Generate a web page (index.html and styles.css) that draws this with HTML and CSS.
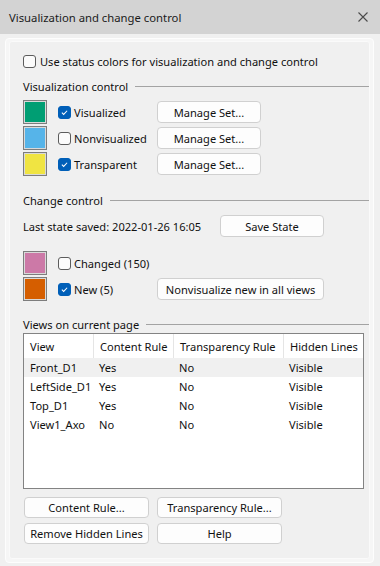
FILE: index.html
```html
<!DOCTYPE html>
<html>
<head>
<meta charset="utf-8">
<link rel="stylesheet" href="styles.css">
</head>
<body>
<div class="titlebar">
  <span class="title">Visualization and change control</span>
  <svg class="close" width="10" height="10" viewBox="0 0 10 10"><path d="M0.5 0.5 L9.5 9.5 M9.5 0.5 L0.5 9.5" stroke="#4a4a4a" stroke-width="1.1" fill="none"/></svg>
</div>
<div class="frame">
  <div class="panel">
    <div class="toprow"><span class="cb"></span><span class="toplbl">Use status colors for visualization and change control</span></div>

    <div class="ghead h-vis"><span>Visualization control</span><span class="rule"></span></div>
    <div class="srows s-vis">
      <div class="srow"><span class="swatch green"></span><span class="cbl"><span class="cb on"><svg viewBox="0 0 13 13"><path d="M3.4 6.7 L5.5 8.8 L9.6 4.4" stroke="#fff" stroke-width="1.2" fill="none"/></svg></span><span class="lbl">Visualized</span></span><span class="btn manage">Manage Set...</span></div>
      <div class="srow"><span class="swatch blue"></span><span class="cbl"><span class="cb"></span><span class="lbl">Nonvisualized</span></span><span class="btn manage">Manage Set...</span></div>
      <div class="srow"><span class="swatch yellow"></span><span class="cbl"><span class="cb on"><svg viewBox="0 0 13 13"><path d="M3.4 6.7 L5.5 8.8 L9.6 4.4" stroke="#fff" stroke-width="1.2" fill="none"/></svg></span><span class="lbl">Transparent</span></span><span class="btn manage">Manage Set...</span></div>
    </div>

    <div class="ghead h-chg"><span>Change control</span><span class="rule"></span></div>
    <div class="saverow"><span class="savedtxt">Last state saved: 2022-01-26 16:05</span><span class="btn save">Save State</span></div>
    <div class="srows s-chg">
      <div class="srow"><span class="swatch pink"></span><span class="cbl"><span class="cb"></span><span class="lbl">Changed (150)</span></span></div>
      <div class="srow"><span class="swatch orange"></span><span class="cbl"><span class="cb on"><svg viewBox="0 0 13 13"><path d="M3.4 6.7 L5.5 8.8 L9.6 4.4" stroke="#fff" stroke-width="1.2" fill="none"/></svg></span><span class="lbl">New (5)</span></span><span class="btn nonvis">Nonvisualize new in all views</span></div>
    </div>

    <div class="ghead h-views"><span>Views on current page</span><span class="rule"></span></div>
    <div class="table">
      <div class="trow thead"><span class="c1">View</span><span class="c2">Content Rule</span><span class="c3">Transparency Rule</span><span class="c4">Hidden Lines</span></div>
      <div class="trow sel"><span class="c1">Front_D1</span><span class="c2">Yes</span><span class="c3">No</span><span class="c4">Visible</span></div>
      <div class="trow"><span class="c1">LeftSide_D1</span><span class="c2">Yes</span><span class="c3">No</span><span class="c4">Visible</span></div>
      <div class="trow"><span class="c1">Top_D1</span><span class="c2">Yes</span><span class="c3">No</span><span class="c4">Visible</span></div>
      <div class="trow"><span class="c1">View1_Axo</span><span class="c2">No</span><span class="c3">No</span><span class="c4">Visible</span></div>
    </div>

    <div class="btngrid">
      <span class="btn wide">Content Rule...</span>
      <span class="btn wide">Transparency Rule...</span>
      <span class="btn wide">Remove Hidden Lines</span>
      <span class="btn wide">Help</span>
    </div>
  </div>
</div>
</body>
</html>
```
FILE: styles.css
```css
* { box-sizing: border-box; }
html, body { margin: 0; padding: 0; }
body {
  width: 380px;
  height: 566px;
  overflow: hidden;
  background: #f0f0f0;
  font-family: "Noto Sans", "Open Sans", sans-serif;
  font-size: 11.1px;
  color: #111;
}
.titlebar {
  height: 34px;
  background: #d3d3d3;
  display: flex;
  align-items: center;
  justify-content: space-between;
  padding: 0 12px 0 9px;
}
.title { font-size: 11.3px; color: #1b1b1b; }
.close { display: block; margin-top: 0; }

.frame {
  margin: 4px 6px 0 5px;
  border: 1px solid #fdfdfd;
  border-radius: 4px;
  background: #f6f6f6;
  padding: 2px 3px 3px 3px;
}
.panel {
  border: 1px solid #fafafa;
  border-radius: 3px;
  background: #f0f0f0;
  padding: 0 0 14px 13px;
}

.toprow {
  margin-top: 9px;
  height: 21px;
  display: flex;
  align-items: center;
}
.toplbl { margin-left: 4px; }

.cb {
  width: 13px;
  height: 13px;
  border: 1px solid #5c5c5c;
  border-radius: 3px;
  background: #fbfbfb;
  flex: none;
  display: block;
}
.cb.on {
  border-color: #005fb8;
  background: #005fb8;
}
.cb svg { display: block; width: 11px; height: 11px; }

.ghead {
  height: 16px;
  display: flex;
  align-items: center;
}
.ghead .rule {
  flex: 1;
  height: 1px;
  background: #a3a3a3;
  margin-left: 7px;
}
.h-vis { margin-top: 6px; }
.h-chg { margin-top: 16px; }
.h-views { margin-top: 15px; }

.srows { display: flex; flex-direction: column; gap: 2px; }
.s-vis { margin-top: 6px; }
.s-chg { margin-top: 14px; }
.srow {
  height: 24px;
  display: flex;
  align-items: center;
}
.swatch {
  width: 24px;
  height: 24px;
  border: 1px solid #7d7d7d;
  box-shadow: inset 0 0 0 1px #d9d9d9;
  flex: none;
}
.green { background: #009e73; }
.blue { background: #56b4e9; }
.yellow { background: #f0e442; }
.pink { background: #cc79a7; }
.orange { background: #d55e00; }

.cbl {
  width: 99px;
  margin-left: 11px;
  display: flex;
  align-items: center;
  flex: none;
}
.lbl { margin-left: 3px; }

.btn {
  height: 22px;
  border: 1px solid #d0d0d0;
  border-radius: 4px;
  background: #fdfdfd;
  display: flex;
  align-items: center;
  justify-content: center;
  flex: none;
  color: #111;
}
.manage { width: 104px; }
.save { width: 104px; }
.nonvis { width: 167px; }

.saverow {
  margin-top: 7px;
  height: 22px;
  display: flex;
  align-items: center;
}
.savedtxt { width: 197px; flex: none; }

.table {
  margin-top: 1px;
  width: 341px;
  height: 156px;
  border: 1px solid #838383;
  background: #fff;
}
.trow {
  display: grid;
  grid-template-columns: 69px 80px 110px 1fr;
  height: 19px;
  align-items: center;
}
.trow span { padding-left: 6px; white-space: nowrap; }
.thead { height: 24px; }
.thead span { height: 24px; display: flex; align-items: center; border-left: 1px solid #e5e5e5; }
.thead span.c1 { border-left: none; }
.sel { background: #f0f0f0; }

.btngrid {
  margin-top: 8px;
  display: grid;
  grid-template-columns: 125px 125px;
  column-gap: 8px;
  row-gap: 5px;
  padding-left: 1px;
}
.wide { height: 21px; width: 125px; }
```
